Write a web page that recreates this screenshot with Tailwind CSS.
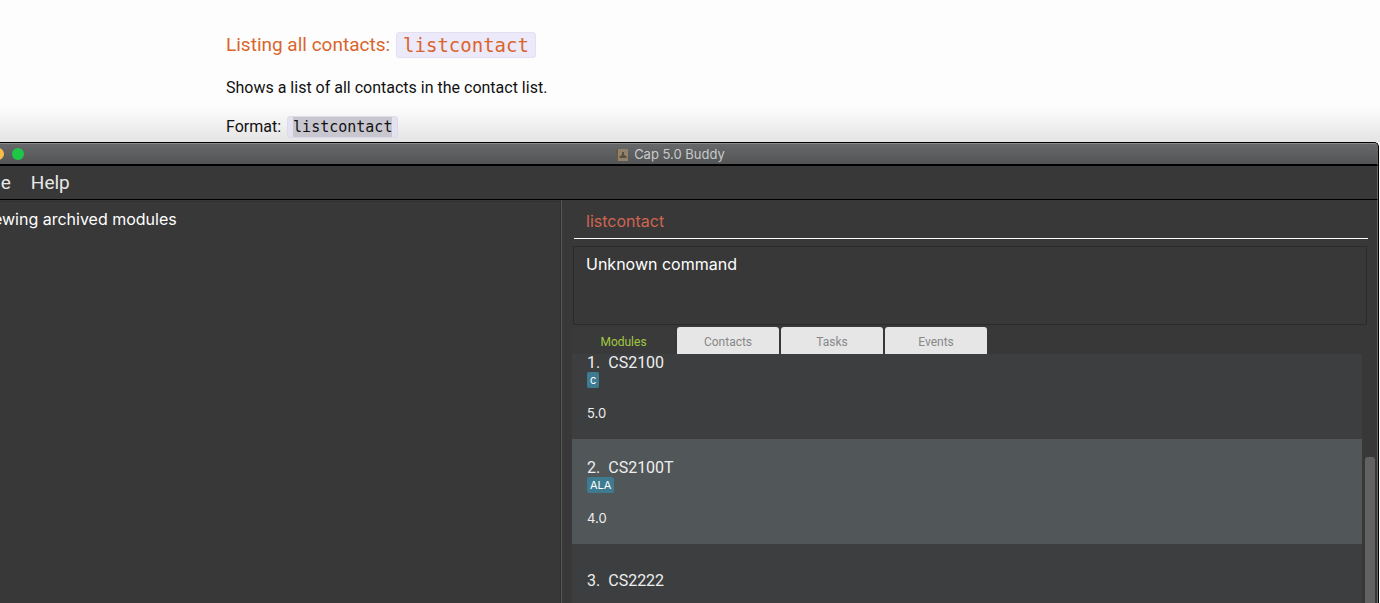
<!DOCTYPE html>
<html lang="en">
<head>
<meta charset="utf-8">
<title>Cap 5.0 Buddy</title>
<script src="https://cdn.jsdelivr.net/npm/@tailwindcss/browser@4"></script>
</head>
<body class="flex h-screen flex-col overflow-hidden bg-[#fdfdfd] font-[Inter,sans-serif]">
<article class="h-[142px] shrink-0 bg-linear-to-b from-[#fdfdfd] from-75% to-[#e4e4e4] pt-[30px] pl-[226px] text-[#111]">
  <h3 class="flex h-[30px] items-center gap-[6px] font-[Roboto,sans-serif] text-[19px] text-[#d9652b]">Listing all contacts: <code class="rounded-[3px] border border-[#e3e0f2] bg-[#ece9fa] px-[6px] font-['DejaVu_Sans_Mono',monospace] text-[19px] leading-6">listcontact</code></h3>
  <p class="mt-4 font-[Roboto,sans-serif] text-[16px] leading-6">Shows a list of all contacts in the contact list.</p>
  <p class="mt-[15px] flex items-center gap-[6px] font-[Roboto,sans-serif] text-[16px] leading-6">Format: <code class="rounded-[3px] border border-[#dddbe9] bg-[#e4e2f1] px-[5px] font-['DejaVu_Sans_Mono',monospace] text-[15px] leading-5"><mark class="inline-block bg-[#c8c7d0] text-[#111]">listcontact</mark></code></p>
</article>
<section class="mr-px flex min-h-0 flex-1 flex-col rounded-tr-[5px] border-t border-r border-black bg-[#383838] text-white">
  <header class="flex h-[23px] shrink-0 items-center rounded-tr-[4px] border-t border-r border-b-2 border-t-[#8a8b8c] border-r-[#666] border-b-black bg-linear-to-b from-[#666869] to-[#525455]">
    <div class="flex w-[38px] items-center gap-2">
      <button aria-label="Minimize" class="-ml-2 size-3 rounded-full bg-[#f7bd45]"></button>
      <button aria-label="Zoom" class="size-3 rounded-full bg-[#1fc748]"></button>
    </div>
    <h1 class="mr-[74px] flex flex-1 items-center justify-center gap-[6px] pt-px text-[13px] text-[#c9cacb]">
      <svg class="h-3 w-[12px]" viewBox="0 0 12 12"><path fill="#665747" d="M0 0h12v12H0z"/><path fill="#92816a" d="M2 0h10v12H2z"/><path fill="#59503f" d="M6 3h2v3h1v1h1.500v2h-7V7H5V6h1z"/></svg>
      Cap 5.0 Buddy</h1>
  </header>
  <nav class="flex h-[34px] shrink-0 items-center gap-5 border-r border-b border-r-[#666] border-b-black pt-[2px] font-[Roboto,sans-serif] text-[19px] text-[#e8e8e8]">
    <button class="-ml-[19px]">File</button>
    <button>Help</button>
  </nav>
  <main class="flex min-h-0 flex-1 border-r border-[#666]">
    <section class="mt-px w-[561px] shrink-0 overflow-hidden border-t border-r border-[#303030] pt-[5px]">
      <p class="-ml-[22px] text-[16px] leading-6">Viewing archived modules</p>
    </section>
    <section class="flex min-w-0 flex-1 flex-col border-l border-[#555]">
      <div class="mr-[9px] ml-3 flex h-[39px] shrink-0 border-b border-white">
        <input aria-label="Command" value="listcontact" class="w-full bg-transparent px-3 pt-1 text-[16px] text-[#cf6552] outline-none">
      </div>
      <div role="status" class="mt-[7px] mr-[10px] ml-[11px] h-[79px] shrink-0 border border-[#2b2b2b] px-3 pt-[5px] text-[16px] leading-6">Unknown command</div>
      <div role="tablist" class="mt-[2px] ml-[10px] flex h-[27px] shrink-0 gap-[2px] font-[Roboto,sans-serif] text-[12px] text-[#888]">
        <button role="tab" aria-selected="true" class="w-[103px] rounded-t-[3px] bg-[#3a3a3a] pt-[2px] text-[#a0c840]">Modules</button>
        <button role="tab" class="w-[102px] rounded-t-[3px] bg-[#e6e6e6] pt-[2px]">Contacts</button>
        <button role="tab" class="w-[102px] rounded-t-[3px] bg-[#e6e6e6] pt-[2px]">Tasks</button>
        <button role="tab" class="w-[102px] rounded-t-[3px] bg-[#e6e6e6] pt-[2px]">Events</button>
      </div>
      <div class="flex min-h-0 flex-1 pr-[2px] pl-[10px]">
        <ul class="min-w-0 flex-1 overflow-hidden bg-[#3c3e3f] text-[#eeeeee]">
          <li class="-mt-5 h-[105px] px-[15px] pt-[19px]">
            <h2 class="flex gap-2 font-[Roboto,sans-serif] text-[16px] leading-5"><span>1.</span>CS2100</h2>
            <span class="-mt-px block h-4 w-fit rounded-[2px] bg-[#3e7b91] px-[3px] text-[11px] leading-4 text-white">c</span>
            <p class="mt-[15px] text-[13px] leading-5">5.0</p>
          </li>
          <li class="h-[105px] bg-[#515658] px-[15px] pt-[19px]">
            <h2 class="flex gap-2 font-[Roboto,sans-serif] text-[16px] leading-5"><span>2.</span>CS2100T</h2>
            <span class="-mt-px block h-4 w-fit rounded-[2px] bg-[#3e7b91] px-[3px] text-[11px] leading-4 text-white">ALA</span>
            <p class="mt-[15px] text-[13px] leading-5">4.0</p>
          </li>
          <li class="h-[105px] px-[15px] pt-[27px]">
            <h2 class="flex gap-2 font-[Roboto,sans-serif] text-[16px] leading-5"><span>3.</span>CS2222</h2>
          </li>
        </ul>
        <div class="ml-[3px] w-[10px] pt-[103px]"><div class="h-full rounded-t-[3px] bg-[#626262]"></div></div>
      </div>
    </section>
  </main>
</section>
</body>
</html>
